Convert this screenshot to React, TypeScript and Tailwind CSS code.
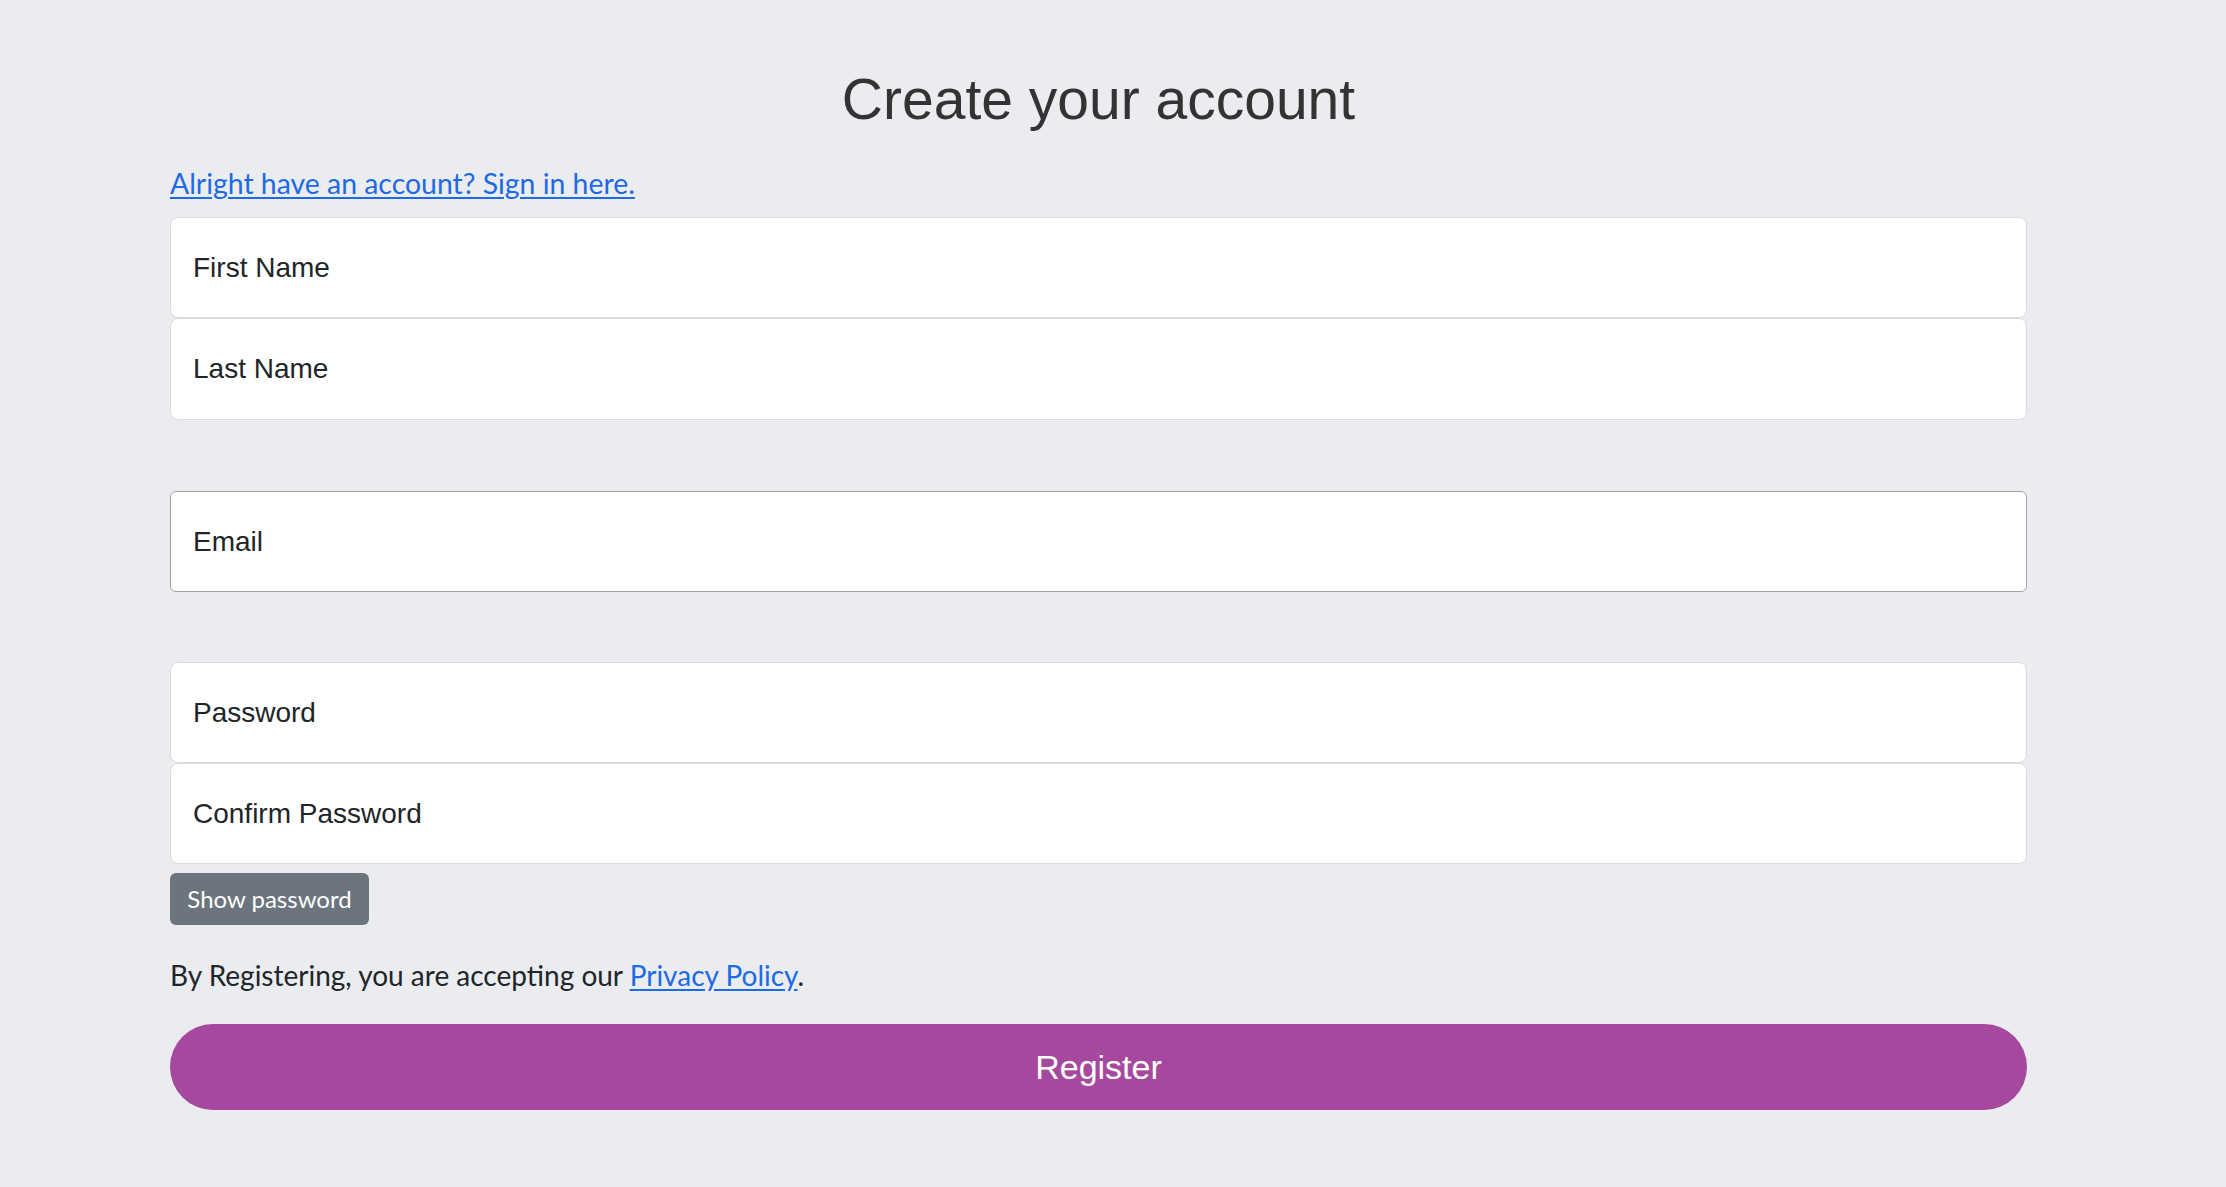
import React from "react";

export default function App() {
  return (
    <div className="min-h-screen w-full bg-[#ebecf0]">
      <div className="ml-[170px] w-[1857px] flex flex-col pt-[65px]">
        {/* Heading */}
        <h1 className="text-center font-['Liberation_Sans',Arial,sans-serif] text-[57px] leading-[68px] text-[#333333] font-normal">
          Create your account
        </h1>

        <a
          href="#"
          className="mt-[33px] self-start font-['Lato','Open_Sans',sans-serif] text-[28.4px] leading-[34px] text-[#1d6ae5] underline underline-offset-[3px]"
        >
          Alright have an account? Sign in here.
        </a>

        {/* Name fields */}
        <div className="mt-[17px] flex flex-col">
          <input
            type="text"
            placeholder="First Name"
            className="h-[101px] w-full rounded-[8px] border border-[#d9dbdf] bg-white px-[22px] font-['Liberation_Sans',Arial,sans-serif] text-[28px] text-[#212529] placeholder:text-[#212529] outline-none"
          />
          <input
            type="text"
            placeholder="Last Name"
            className="h-[102px] w-full rounded-[8px] border border-[#d9dbdf] bg-white px-[22px] font-['Liberation_Sans',Arial,sans-serif] text-[28px] text-[#212529] placeholder:text-[#212529] outline-none"
          />
        </div>

        {/* Email */}
        <input
          type="email"
          placeholder="Email"
          className="mt-[71px] h-[101px] w-full rounded-[6px] border border-[#a3a4a7] bg-white px-[22px] font-['Liberation_Sans',Arial,sans-serif] text-[28px] text-[#212529] placeholder:text-[#212529] outline-none"
        />

        {/* Passwords */}
        <div className="mt-[70px] flex flex-col">
          <input
            type="password"
            placeholder="Password"
            className="h-[101px] w-full rounded-[8px] border border-[#d9dbdf] bg-white px-[22px] font-['Liberation_Sans',Arial,sans-serif] text-[28px] text-[#212529] placeholder:text-[#212529] outline-none"
          />
          <input
            type="password"
            placeholder="Confirm Password"
            className="h-[101px] w-full rounded-[8px] border border-[#d9dbdf] bg-white px-[22px] font-['Liberation_Sans',Arial,sans-serif] text-[28px] text-[#212529] placeholder:text-[#212529] outline-none"
          />
        </div>

        <button
          type="button"
          className="mt-[9px] self-start h-[52px] w-[199px] rounded-[6px] bg-[#6c757d] font-['Lato','Open_Sans',sans-serif] text-[24px] text-white flex items-center justify-center"
        >
          Show password
        </button>

        <p className="mt-[33px] font-['Lato','Open_Sans',sans-serif] text-[28px] leading-[34px] text-[#212529]">
          By Registering, you are accepting our{" "}
          <a href="#" className="text-[#1d6ae5] underline underline-offset-[3px]">
            Privacy Policy
          </a>
          .
        </p>

        <button
          type="button"
          className="mt-[32px] h-[86px] w-full rounded-full bg-[#a6499e] font-['Liberation_Sans',Arial,sans-serif] text-[34px] text-white flex items-center justify-center"
        >
          Register
        </button>
      </div>
    </div>
  );
}
